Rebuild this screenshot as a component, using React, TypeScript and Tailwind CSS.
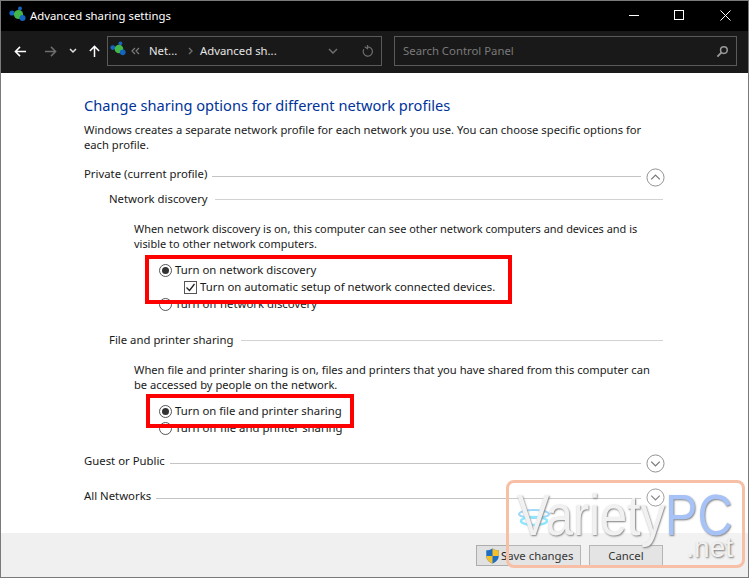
import React from 'react';

const font = { fontFamily: '"Noto Sans", sans-serif' };
const wmFont = { fontFamily: '"Liberation Sans", sans-serif' };

const NetIcon = ({ className }: { className?: string }) => (
  <svg viewBox="0 0 18 18" className={className}>
    <circle cx="3" cy="7" r="2.6" fill="#1565c0" />
    <circle cx="11" cy="2.5" r="2" fill="#1565c0" />
    <circle cx="9.5" cy="8.5" r="4.6" fill="#43b649" />
    <circle cx="13.5" cy="12" r="3" fill="#1565c0" />
  </svg>
);

const Radio = ({ on }: { on?: boolean }) => (
  <span className="w-[13px] h-[13px] mt-[2px] rounded-full border border-[#555] bg-white flex items-center justify-center shrink-0">
    {on && <span className="w-[7px] h-[7px] rounded-full bg-[#333]" />}
  </span>
);

const Chevron = ({ up }: { up?: boolean }) => (
  <svg viewBox="0 0 20 20" className="w-[19px] h-[19px] shrink-0">
    <circle cx="10" cy="10" r="9" fill="#fff" stroke="#8c8c8c" strokeWidth="1" />
    <path d={up ? 'M5.5 12 L10 7.5 L14.5 12' : 'M5.5 8 L10 12.5 L14.5 8'} fill="none" stroke="#7a7a7a" strokeWidth="1.4" />
  </svg>
);

const Section = ({ title, up, chev }: { title: string; up?: boolean; chev: string }) => (
  <div className="flex items-center h-[15px] mr-[84px]">
    <span className="whitespace-nowrap">{title}</span>
    <span className="flex-1 h-px bg-[#c4c4c4] mx-[5px] mt-[6px]" />
    <span className={`-mr-[1px] ${chev}`}><Chevron up={up} /></span>
  </div>
);

const SubHead = ({ title }: { title: string }) => (
  <div className="flex items-center h-[15px] ml-[25px] mr-[85px]">
    <span className="whitespace-nowrap">{title}</span>
    <span className="flex-1 h-px bg-[#d2d2d2] ml-[7px] mt-[2px]" />
  </div>
);

const RadioRow = ({ on, label, className }: { on?: boolean; label: string; className?: string }) => (
  <div className={`flex items-center h-[17px] ml-[75px] gap-[3px] ${className ?? ''}`}>
    <Radio on={on} />
    <span className="whitespace-nowrap">{label}</span>
  </div>
);

export default function App() {
  return (
    <div style={font} className="relative w-[749px] h-[578px] overflow-hidden bg-white border border-[#7a7a7a] border-b-0 text-[11.35px] leading-[15px] text-[#1a1a1a] flex flex-col">
      {/* Title bar */}
      <div className="h-[30px] bg-black flex items-center text-white shrink-0">
        <NetIcon className="w-[18px] h-[18px] ml-[8px] -mt-[3px]" />
        <span className="ml-[3px] -mt-[1px]">Advanced sharing settings</span>
        <div className="ml-auto flex items-center h-full pb-[2px]">
          <span className="w-[44px] flex justify-center"><span className="w-[10px] h-px bg-white" /></span>
          <span className="w-[46px] flex justify-center"><span className="w-[10px] h-[10px] border border-white" /></span>
          <span className="w-[46px] flex justify-center">
            <svg viewBox="0 0 11 11" className="w-[11px] h-[11px]"><path d="M0.5 0.5 L10.5 10.5 M10.5 0.5 L0.5 10.5" stroke="#fff" strokeWidth="1" /></svg>
          </span>
        </div>
      </div>

      {/* Address bar */}
      <div className="h-[42px] bg-[#191919] flex items-center pb-[2px] shrink-0 text-[#e6e6e6]">
        <svg viewBox="0 0 14 14" className="w-[13px] h-[13px] ml-[13px]"><path d="M13 7 H2 M6.5 2 L1.5 7 L6.5 12" fill="none" stroke="#fff" strokeWidth="1.6" /></svg>
        <svg viewBox="0 0 14 14" className="w-[13px] h-[13px] ml-[17px]"><path d="M1 7 H12 M7.5 2 L12.5 7 L7.5 12" fill="none" stroke="#6e6e6e" strokeWidth="1.6" /></svg>
        <svg viewBox="0 0 8 6" className="w-[8px] h-[6px] ml-[12px]"><path d="M1 1 L4 4 L7 1" fill="none" stroke="#e0e0e0" strokeWidth="1.5" /></svg>
        <svg viewBox="0 0 14 14" className="w-[13px] h-[13px] ml-[11px]"><path d="M7 13 V2 M2 6.5 L7 1.5 L12 6.5" fill="none" stroke="#fff" strokeWidth="1.6" /></svg>
        <div className="ml-[6px] w-[275px] h-[30px] border border-[#5a5a5a] flex items-center">
          <NetIcon className="w-[17px] h-[17px] ml-[2px] -mt-[3px]" />
          <svg viewBox="0 0 9 8" className="w-[9px] h-[8px] ml-[4px]"><path d="M4 1 L1 4 L4 7 M8 1 L5 4 L8 7" fill="none" stroke="#7d7d7d" strokeWidth="1.2" /></svg>
          <span className="ml-[9px] w-[28px] whitespace-nowrap -mt-[2px]">Net...</span>
          <svg viewBox="0 0 6 8" className="w-[6px] h-[8px] ml-[11px]"><path d="M1 1 L4 4 L1 7" fill="none" stroke="#6e6e6e" strokeWidth="1.4" /></svg>
          <span className="ml-[6px] w-[78px] whitespace-nowrap -mt-[2px]">Advanced sh...</span>
          <svg viewBox="0 0 10 6" className="w-[10px] h-[6px] ml-[50px]"><path d="M1 1 L5 5 L9 1" fill="none" stroke="#6e6e6e" strokeWidth="1.5" /></svg>
          <svg viewBox="0 0 14 14" className="w-[13px] h-[13px] ml-[23px]"><path d="M7 2 A5 5 0 1 1 3 4.5 M7 0 V4 L4 2" fill="none" stroke="#6e6e6e" strokeWidth="1.3" /></svg>
        </div>
        <div className="ml-[12px] w-[343px] h-[30px] border border-[#5a5a5a] flex items-center text-[#7a7a7a] pl-[8px]">
          <span className="-mt-[2px]">Search Control Panel</span>
          <svg viewBox="0 0 14 14" className="w-[13px] h-[13px] ml-auto mr-[7px]"><circle cx="8.5" cy="5.5" r="3.6" fill="none" stroke="#9a9a9a" strokeWidth="1.6" /><path d="M6 8 L1.5 12.5" stroke="#9a9a9a" strokeWidth="2" /></svg>
        </div>
      </div>

      {/* Content */}
      <div className="flex-1 pl-[83px] pt-[22px] min-h-0">
        <h1 className="text-[14.6px] leading-[20px] font-normal text-[#003399] whitespace-nowrap">Change sharing options for different network profiles</h1>
        <p className="mt-[7px] w-[565px] text-[11.22px]">Windows creates a separate network profile for each network you use. You can choose specific options for each profile.</p>
        <div className="mt-[14px]"><Section title="Private (current profile)" up chev="mt-[7px]" /></div>
        <div className="mt-[10px]"><SubHead title="Network discovery" /></div>
        <p className="mt-[15px] ml-[50px] w-[520px] text-[10.95px]">When network discovery is on, this computer can see other network computers and devices and is visible to other network computers.</p>
        <RadioRow on label="Turn on network discovery" className="mt-[10px]" />
        <div className="flex items-center h-[17px] ml-[100px] gap-[3px]">
          <span className="w-[13px] h-[13px] mt-[2px] border border-[#555] flex items-center justify-center shrink-0">
            <svg viewBox="0 0 11 11" className="w-[11px] h-[11px]"><path d="M1.5 5.5 L4.5 8.5 L9.5 2" fill="none" stroke="#222" strokeWidth="1.3" /></svg>
          </span>
          <span className="whitespace-nowrap">Turn on automatic setup of network connected devices.</span>
        </div>
        <RadioRow label="Turn off network discovery" />
        <div className="mt-[20px]"><SubHead title="File and printer sharing" /></div>
        <p className="mt-[15px] ml-[50px] w-[530px] text-[11.18px]">When file and printer sharing is on, files and printers that you have shared from this computer can be accessed by people on the network.</p>
        <RadioRow on label="Turn on file and printer sharing" className="mt-[10px]" />
        <RadioRow label="Turn off file and printer sharing" />
        <div className="mt-[17px]"><Section title="Guest or Public" chev="mt-[6px]" /></div>
        <div className="mt-[20px]"><Section title="All Networks" chev="mt-[4px]" /></div>
      </div>

      {/* Footer */}
      <div className="h-[45px] bg-[#f0f0f0] border-b border-[#7a7a7a] shrink-0 flex items-start justify-end pt-[12px] pr-[85px] gap-[8px]">
        <button className="w-[105px] h-[21px] border border-[#adadad] bg-[#e1e1e1] flex items-center pl-[8px] gap-[1px] text-[#1a1a1a]">
          <svg viewBox="0 0 16 18" className="w-[15px] h-[16px]">
            <path d="M8 0.5 C10 2 13 2.5 15 2.5 V9 C15 13 12 16 8 17.5 C4 16 1 13 1 9 V2.5 C3 2.5 6 2 8 0.5 Z" fill="#1f6fc0" />
            <path d="M8 0.5 C10 2 13 2.5 15 2.5 V9 H8 Z" fill="#f5c02c" />
            <path d="M8 9 H1 C1 13 4 16 8 17.5 Z" fill="#f5c02c" />
          </svg>
          <span>Save changes</span>
        </button>
        <button className="w-[74px] h-[21px] border border-[#adadad] bg-[#e1e1e1] text-[#1a1a1a]">Cancel</button>
      </div>

      {/* Red highlight boxes */}
      <div className="absolute left-[144px] top-[254px] w-[367px] h-[49px] border-[4px] border-[#fe0000]" />
      <div className="absolute left-[145px] top-[393px] w-[208px] h-[34px] border-[4px] border-[#fe0000]" />

      {/* Watermark */}
      <div className="absolute left-[505px] top-[479px] w-[239px] h-[88px] rounded-[8px] border-[3px] border-[#f6bfa6] bg-white/10">
        <svg viewBox="0 0 34 22" className="absolute left-[8px] top-[23px] w-[34px] h-[22px]">
          <ellipse cx="17" cy="8" rx="15" ry="4" fill="none" stroke="#9fd8f8" strokeWidth="2" />
          <ellipse cx="17" cy="15" rx="13" ry="4" fill="none" stroke="#8fe6ff" strokeWidth="2.5" />
        </svg>
        <div style={wmFont} className="absolute left-[8px] top-[9px] origin-left scale-x-[0.84] whitespace-nowrap text-[58px] leading-[46px] [text-shadow:1px_1px_2px_#7f7f7f]">
          <span className="text-[#f1f1f1]">Variety</span><span className="text-[#a6c2f6]">PC</span>
        </div>
        <div style={wmFont} className="absolute right-[9px] top-[55px] text-[28px] leading-[20px] text-[#f1f1f1] [text-shadow:1px_1px_2px_#7a7a7a]">.net</div>
      </div>
    </div>
  );
}
